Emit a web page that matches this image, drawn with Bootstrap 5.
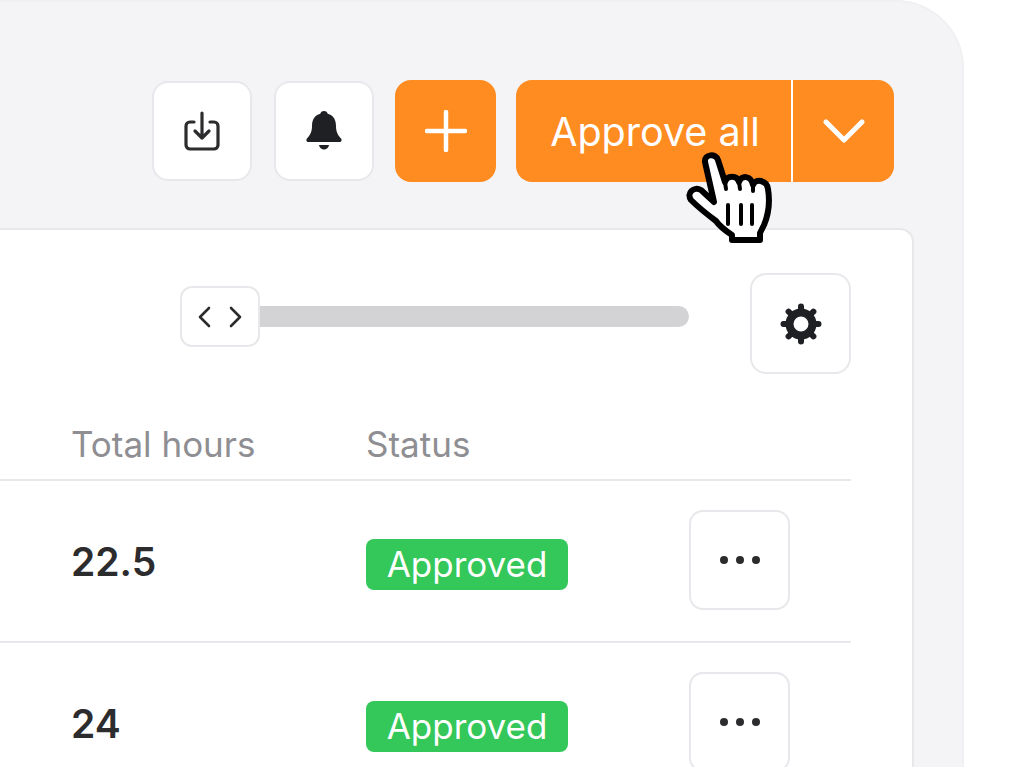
<!DOCTYPE html>
<html lang="en">
<head>
    <meta charset="UTF-8">
    <meta name="viewport" content="width=device-width, initial-scale=1.0">
    <title>Timesheets</title>
    <link href="https://cdn.jsdelivr.net/npm/bootstrap@5.3.0/dist/css/bootstrap.min.css" rel="stylesheet">
    <style>
        html, body { height: 767px; overflow: hidden; background: #fff; }
        body { font-family: Inter, "Liberation Sans", sans-serif; color: #2c2c2e; }
        .app-frame { width: 964px; height: 767px; overflow: hidden; background: #f4f4f7; border-right: 2px solid #f0f0f2; border-top: 2px solid #f0f0f2; border-top-right-radius: 68px; padding-top: 78px; }
        .top-tools { padding-right: 68px; height: 102px; gap: 21px; }
        .tool-btn { width: 101px; height: 101px; padding: 0; border: 2px solid #e8e8ec; border-radius: 16px; background: #fff; }
        .top-tools .tool-btn { width: 100px; height: 100px; margin-top: 1px; }
        .top-tools .tool-first { margin-right: 1px; }
        .top-tools .tool-btn.is-orange { width: 101px; height: 102px; margin-top: 0; background: #ff8c21; border-color: #ff8c21; }
        .split-group { margin-left: -1px; }
        .split-main { width: 275px; height: 102px; background: #ff8c21; color: #fff; border: 0; border-radius: 16px 0 0 16px; font-size: 39.5px; padding: 3px 0 0 3px; }
        .split-arrow { width: 103px; height: 102px; background: #ff8c21; border: 0; border-left: 2px solid #fff; border-radius: 0 16px 16px 0; padding: 0; }
        .table-panel { width: 914px; margin-top: 46px; height: 539px; overflow: hidden; background: #fff; border: 2px solid #e8e8ec; border-left: 0; border-bottom: 0; border-radius: 0 14px 0 0; padding-right: 61px; }
        .scroll-row { height: 101px; margin-top: 43px; }
        .scroll-box { margin-left: 180px; margin-bottom: 14px; }
        .scroll-track { width: 429px; height: 21px; background: #d3d3d6; border-radius: 0 11px 11px 0; }
        .scroll-handle { width: 80px; height: 61px; background: #fff; border: 2px solid #e8e8ec; border-radius: 12px; }
        .head-row { height: 107px; padding-bottom: 9px; border-bottom: 2px solid #e8e8ec; font-size: 35px; color: #8e8e93; }
        .data-row { height: 162px; border-bottom: 2px solid #e8e8ec; }
        .cell-hours { width: 366px; padding-left: 71px; flex: none; }
        .cell-status { width: 323px; flex: none; }
        .data-row .cell-status { padding-top: 7px; }
        .hours-val { font-size: 39px; font-weight: 600; padding-top: 3px; }
        .status-pill { display: block; width: 202px; background: #34c759; color: #fff; font-size: 35px; line-height: 51px; height: 51px; text-align: center; border-radius: 8px; }
        .more-btn { width: 101px; height: 100px; margin-bottom: 2px; background: #fff; border: 2px solid #e8e8ec; border-radius: 14px; padding: 0; }
        .hand-cursor { position: absolute; left: 680px; top: 145px; width: 100px; height: 105px; }
    </style>
</head>
<body>
<div class="app-frame">
    <div class="top-tools d-flex justify-content-end">
        <button class="tool-btn tool-first d-flex align-items-center justify-content-center" type="button" aria-label="Download">
            <svg width="38" height="42" viewBox="0 0 38 42" fill="none" stroke="#2c2c2e" stroke-width="3.2" stroke-linecap="round" stroke-linejoin="round"><path d="M11 12H7a4 4 0 0 0-4 4v19a4 4 0 0 0 4 4h24a4 4 0 0 0 4-4V16a4 4 0 0 0-4-4h-4"/><path d="M19 3v25M12 21l7 7 7-7"/></svg>
        </button>
        <button class="tool-btn d-flex align-items-center justify-content-center" type="button" aria-label="Notifications">
            <svg width="38" height="42" viewBox="0 0 38 42" fill="#1f2023"><path d="M19 1c2 0 3.400 1.200 3.700 2.800 6 1.500 8.300 6.500 8.300 12 0 6.700 2 9.200 5 12.700 1.300 1.500.5 3.500-1.500 3.500H3.500c-2 0-2.800-2-1.500-3.500 3-3.500 5-6 5-12.700 0-5.500 2.300-10.500 8.300-12C15.600 2.200 17 1 19 1z"/><path d="M14 35h10c-.5 2.800-2.500 4.500-5 4.500s-4.500-1.700-5-4.500z"/></svg>
        </button>
        <button class="tool-btn is-orange d-flex align-items-center justify-content-center" type="button" aria-label="Add">
            <svg width="42" height="42" viewBox="0 0 42 42" stroke="#fff" stroke-width="4.500" stroke-linecap="round"><path d="M21 2v38M2 21h38"/></svg>
        </button>
        <div class="d-flex split-group">
            <button class="split-main" type="button">Approve all</button>
            <button class="split-arrow d-flex align-items-center justify-content-center" type="button" aria-label="More">
                <svg width="42" height="26" viewBox="0 0 42 26" fill="none" stroke="#fff" stroke-width="5" stroke-linecap="round" stroke-linejoin="round"><path d="M3 4l18 18L39 4"/></svg>
            </button>
        </div>
    </div>

    <div class="table-panel">
        <div class="scroll-row d-flex align-items-center justify-content-end">
            <div class="d-flex align-items-center me-auto scroll-box">
                <div class="scroll-handle d-flex align-items-center justify-content-center">
                    <svg width="46" height="22" viewBox="0 0 46 22" fill="none" stroke="#2c2c2e" stroke-width="2.600" stroke-linecap="round" stroke-linejoin="round"><path d="M12 2l-9 9 9 9M34 2l9 9-9 9"/></svg>
                </div>
                <div class="scroll-track"></div>
            </div>
            <button class="tool-btn d-flex align-items-center justify-content-center" type="button" aria-label="Settings">
                <svg width="42" height="42" viewBox="0 0 42 42"><circle cx="21" cy="21" r="11.500" fill="none" stroke="#1f2023" stroke-width="8"/><g stroke="#1f2023" stroke-width="6" stroke-linecap="round"><path d="M21 3.500v2M21 36.500v2M3.500 21h2M36.500 21h2M8.600 8.600l1.400 1.400M32 32l1.400 1.400M8.600 33.400L10 32M32 10l1.400-1.400"/></g></svg>
            </button>
        </div>
        <div class="head-row d-flex align-items-end">
            <div class="cell-hours">Total hours</div>
            <div class="cell-status">Status</div>
        </div>
        <div class="data-row d-flex align-items-center">
            <div class="cell-hours hours-val">22.5</div>
            <div class="cell-status"><span class="status-pill">Approved</span></div>
            <button class="more-btn d-flex align-items-center justify-content-center" type="button" aria-label="Row actions">
                <svg width="42" height="10" viewBox="0 0 42 10" fill="#2c2c2e"><circle cx="5" cy="5" r="4"/><circle cx="21" cy="5" r="4"/><circle cx="37" cy="5" r="4"/></svg>
            </button>
        </div>
        <div class="data-row d-flex align-items-center">
            <div class="cell-hours hours-val">24</div>
            <div class="cell-status"><span class="status-pill">Approved</span></div>
            <button class="more-btn d-flex align-items-center justify-content-center" type="button" aria-label="Row actions">
                <svg width="42" height="10" viewBox="0 0 42 10" fill="#2c2c2e"><circle cx="5" cy="5" r="4"/><circle cx="21" cy="5" r="4"/><circle cx="37" cy="5" r="4"/></svg>
            </button>
        </div>
    </div>
</div>

<svg class="hand-cursor" viewBox="0 0 100 105" fill="#fff" stroke="#000" stroke-width="6" stroke-linejoin="round" stroke-linecap="round">
    <path d="M25 17C24 9 36 8 38 15L45 37C47 30 57 30 59 37C61 30 71 30 73 40C75 33 87 35 88 44C90 56 89 68 84 80L80 88V95H52V90C46 86 40 82 36 76C28 70 18 62 11 55C6 48 14 41 21 45L34 57Z"/>
    <path d="M45 37l1 7M59 37l1 7M73 40v6" fill="none" stroke-width="4"/>
    <path d="M48 60v19M61 60v19M72 60v19" fill="none" stroke-width="4"/>
</svg>

<script src="https://cdn.jsdelivr.net/npm/bootstrap@5.3.0/dist/js/bootstrap.bundle.min.js"></script>
</body>
</html>
